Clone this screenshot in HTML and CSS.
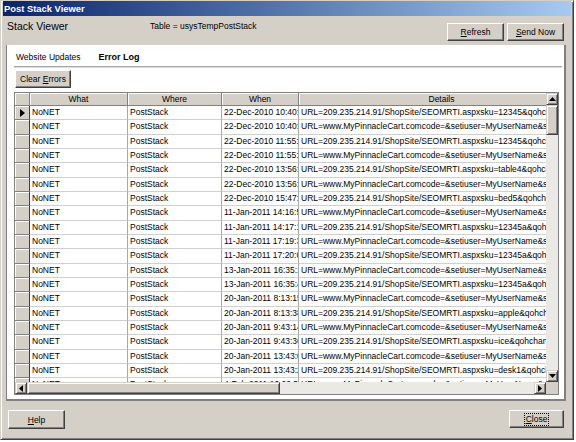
FILE: index.html
```html
<!DOCTYPE html>
<html>
<head>
<meta charset="utf-8">
<title>Post Stack Viewer</title>
<link rel="stylesheet" href="styles.css">
</head>
<body>
<div class="window">
  <div class="titlebar">Post Stack Viewer</div>
  <div class="toolbar">
    <div class="app-title">Stack Viewer</div>
    <div class="table-name">Table = usysTempPostStack</div>
    <div class="toolbar-buttons">
      <button class="btn btn-tool"><span class="label"><u>R</u>efresh</span></button>
      <button class="btn btn-tool"><span class="label"><u>S</u>end Now</span></button>
    </div>
  </div>
  <div class="panel">
    <div class="tabs">
      <span class="tab">Website Updates</span>
      <span class="tab tab-active">Error Log</span>
    </div>
    <div class="separator"></div>
    <button class="btn btn-clear"><span class="label">Clear <u>E</u>rrors</span></button>
    <div class="grid">
      <div class="grid-main">
        <div class="grid-view">
          <div class="row head">
            <div class="cell sel"></div>
            <div class="cell c-what">What</div>
            <div class="cell c-where">Where</div>
            <div class="cell c-when">When</div>
            <div class="cell c-details">Details</div>
          </div>
          <div class="row">
            <div class="cell sel"><svg class="pointer" width="5" height="8" viewBox="0 0 5 8"><polygon points="0,0 5,4 0,8" fill="#000"/></svg></div>
            <div class="cell c-what">NoNET</div><div class="cell c-where">PostStack</div><div class="cell c-when">22-Dec-2010 10:40:12</div><div class="cell c-details">URL=209.235.214.91/ShopSite/SEOMRTI.aspxsku=12345&amp;qohchange=1</div>
          </div>
          <div class="row">
            <div class="cell sel"></div>
            <div class="cell c-what">NoNET</div><div class="cell c-where">PostStack</div><div class="cell c-when">22-Dec-2010 10:40:31</div><div class="cell c-details">URL=www.MyPinnacleCart.comcode=&amp;setiuser=MyUserName&amp;setipwd=x</div>
          </div>
          <div class="row">
            <div class="cell sel"></div>
            <div class="cell c-what">NoNET</div><div class="cell c-where">PostStack</div><div class="cell c-when">22-Dec-2010 11:55:04</div><div class="cell c-details">URL=209.235.214.91/ShopSite/SEOMRTI.aspxsku=12345&amp;qohchange=1</div>
          </div>
          <div class="row">
            <div class="cell sel"></div>
            <div class="cell c-what">NoNET</div><div class="cell c-where">PostStack</div><div class="cell c-when">22-Dec-2010 11:55:22</div><div class="cell c-details">URL=www.MyPinnacleCart.comcode=&amp;setiuser=MyUserName&amp;setipwd=x</div>
          </div>
          <div class="row">
            <div class="cell sel"></div>
            <div class="cell c-what">NoNET</div><div class="cell c-where">PostStack</div><div class="cell c-when">22-Dec-2010 13:56:10</div><div class="cell c-details">URL=209.235.214.91/ShopSite/SEOMRTI.aspxsku=table4&amp;qohchange=1</div>
          </div>
          <div class="row">
            <div class="cell sel"></div>
            <div class="cell c-what">NoNET</div><div class="cell c-where">PostStack</div><div class="cell c-when">22-Dec-2010 13:56:41</div><div class="cell c-details">URL=www.MyPinnacleCart.comcode=&amp;setiuser=MyUserName&amp;setipwd=x</div>
          </div>
          <div class="row">
            <div class="cell sel"></div>
            <div class="cell c-what">NoNET</div><div class="cell c-where">PostStack</div><div class="cell c-when">22-Dec-2010 15:47:08</div><div class="cell c-details">URL=209.235.214.91/ShopSite/SEOMRTI.aspxsku=bed5&amp;qohchange=1</div>
          </div>
          <div class="row">
            <div class="cell sel"></div>
            <div class="cell c-what">NoNET</div><div class="cell c-where">PostStack</div><div class="cell c-when">11-Jan-2011 14:16:52</div><div class="cell c-details">URL=www.MyPinnacleCart.comcode=&amp;setiuser=MyUserName&amp;setipwd=x</div>
          </div>
          <div class="row">
            <div class="cell sel"></div>
            <div class="cell c-what">NoNET</div><div class="cell c-where">PostStack</div><div class="cell c-when">11-Jan-2011 14:17:13</div><div class="cell c-details">URL=209.235.214.91/ShopSite/SEOMRTI.aspxsku=12345a&amp;qohchange=1</div>
          </div>
          <div class="row">
            <div class="cell sel"></div>
            <div class="cell c-what">NoNET</div><div class="cell c-where">PostStack</div><div class="cell c-when">11-Jan-2011 17:19:35</div><div class="cell c-details">URL=www.MyPinnacleCart.comcode=&amp;setiuser=MyUserName&amp;setipwd=x</div>
          </div>
          <div class="row">
            <div class="cell sel"></div>
            <div class="cell c-what">NoNET</div><div class="cell c-where">PostStack</div><div class="cell c-when">11-Jan-2011 17:20:02</div><div class="cell c-details">URL=209.235.214.91/ShopSite/SEOMRTI.aspxsku=12345a&amp;qohchange=1</div>
          </div>
          <div class="row">
            <div class="cell sel"></div>
            <div class="cell c-what">NoNET</div><div class="cell c-where">PostStack</div><div class="cell c-when">13-Jan-2011 16:35:17</div><div class="cell c-details">URL=www.MyPinnacleCart.comcode=&amp;setiuser=MyUserName&amp;setipwd=x</div>
          </div>
          <div class="row">
            <div class="cell sel"></div>
            <div class="cell c-what">NoNET</div><div class="cell c-where">PostStack</div><div class="cell c-when">13-Jan-2011 16:35:44</div><div class="cell c-details">URL=209.235.214.91/ShopSite/SEOMRTI.aspxsku=12345a&amp;qohchange=1</div>
          </div>
          <div class="row">
            <div class="cell sel"></div>
            <div class="cell c-what">NoNET</div><div class="cell c-where">PostStack</div><div class="cell c-when">20-Jan-2011 8:13:15</div><div class="cell c-details">URL=www.MyPinnacleCart.comcode=&amp;setiuser=MyUserName&amp;setipwd=x</div>
          </div>
          <div class="row">
            <div class="cell sel"></div>
            <div class="cell c-what">NoNET</div><div class="cell c-where">PostStack</div><div class="cell c-when">20-Jan-2011 8:13:38</div><div class="cell c-details">URL=209.235.214.91/ShopSite/SEOMRTI.aspxsku=apple&amp;qohchange=1</div>
          </div>
          <div class="row">
            <div class="cell sel"></div>
            <div class="cell c-what">NoNET</div><div class="cell c-where">PostStack</div><div class="cell c-when">20-Jan-2011 9:43:14</div><div class="cell c-details">URL=www.MyPinnacleCart.comcode=&amp;setiuser=MyUserName&amp;setipwd=x</div>
          </div>
          <div class="row">
            <div class="cell sel"></div>
            <div class="cell c-what">NoNET</div><div class="cell c-where">PostStack</div><div class="cell c-when">20-Jan-2011 9:43:36</div><div class="cell c-details">URL=209.235.214.91/ShopSite/SEOMRTI.aspxsku=ice&amp;qohchange=1</div>
          </div>
          <div class="row">
            <div class="cell sel"></div>
            <div class="cell c-what">NoNET</div><div class="cell c-where">PostStack</div><div class="cell c-when">20-Jan-2011 13:43:05</div><div class="cell c-details">URL=www.MyPinnacleCart.comcode=&amp;setiuser=MyUserName&amp;setipwd=x</div>
          </div>
          <div class="row">
            <div class="cell sel"></div>
            <div class="cell c-what">NoNET</div><div class="cell c-where">PostStack</div><div class="cell c-when">20-Jan-2011 13:43:29</div><div class="cell c-details">URL=209.235.214.91/ShopSite/SEOMRTI.aspxsku=desk1&amp;qohchange=1</div>
          </div>
          <div class="row">
            <div class="cell sel"></div>
            <div class="cell c-what">NoNET</div><div class="cell c-where">PostStack</div><div class="cell c-when">4-Feb-2011 10:22:51</div><div class="cell c-details">URL=www.MyPinnacleCart.comcode=&amp;setiuser=MyUserName&amp;setipwd=x</div>
          </div>
        </div>
        <div class="vscroll">
          <div class="sb-btn"><svg width="7" height="4" viewBox="0 0 7 4"><polygon points="3.5,0 7,4 0,4" fill="#000"/></svg></div>
          <div class="sb-thumb v-thumb"></div>
          <div class="sb-track"></div>
          <div class="sb-btn"><svg width="7" height="4" viewBox="0 0 7 4"><polygon points="0,0 7,0 3.5,4" fill="#000"/></svg></div>
        </div>
      </div>
      <div class="hscroll">
        <div class="sb-btn"><svg width="4" height="7" viewBox="0 0 4 7"><polygon points="4,0 4,7 0,3.5" fill="#000"/></svg></div>
        <div class="sb-thumb h-thumb"></div>
        <div class="sb-track"></div>
        <div class="sb-btn"><svg width="4" height="7" viewBox="0 0 4 7"><polygon points="0,0 4,3.5 0,7" fill="#000"/></svg></div>
        <div class="sb-corner"></div>
      </div>
    </div>
  </div>
  <div class="footer">
    <button class="btn btn-help"><span class="label"><u>H</u>elp</span></button>
    <button class="btn btn-close"><span class="label focus"><u>C</u>lose</span></button>
  </div>
</div>
</body>
</html>
```

FILE: styles.css
```css
* { box-sizing: border-box; }
html, body { margin: 0; padding: 0; }
body {
  background: #fff;
  width: 576px;
  height: 442px;
  overflow: hidden;
  font-family: "Liberation Sans", Arial, sans-serif;
  color: #000;
}
.window {
  width: 574px;
  height: 440px;
  background: #d4d0c8;
  border: 1px solid;
  border-color: #d4d0c8 #404040 #404040 #d4d0c8;
  box-shadow: inset 1px 1px #fff, inset -1px -1px #808080;
  padding: 0 2px 2px 2px;
  display: flex;
  flex-direction: column;
}
.titlebar {
  height: 15px;
  flex: none;
  background: linear-gradient(to right, #0a246a, #a6caf0);
  color: #fff;
  font-weight: bold;
  font-size: 9.4px;
  line-height: 15px;
  padding-left: 1px;
  white-space: nowrap;
}
.toolbar {
  height: 29px;
  flex: none;
  display: flex;
  align-items: flex-start;
}
.app-title {
  width: 147px;
  padding-left: 4px;
  margin-top: 4px;
  font-size: 10.5px;
  line-height: 12px;
  white-space: nowrap;
}
.table-name {
  margin-top: 5px;
  font-size: 8.5px;
  line-height: 10px;
  white-space: nowrap;
}
.toolbar-buttons {
  margin-left: auto;
  margin-right: 7px;
  margin-top: 7px;
  display: flex;
  gap: 3px;
}
.btn {
  background: #d4d0c8;
  border: 1px solid;
  border-color: #fff #404040 #404040 #fff;
  box-shadow: inset -1px -1px #808080;
  font-family: "Liberation Sans", Arial, sans-serif;
  font-size: 8.5px;
  color: #000;
  padding: 0;
  margin: 0;
  display: flex;
  align-items: center;
  justify-content: center;
}
.label {
  display: inline-block;
  line-height: 10px;
  white-space: nowrap;
}
.btn u { text-decoration: underline; }
.btn-tool { width: 57px; height: 18px; }
.panel {
  flex: none;
  margin-left: 3px;
  width: 560px;
  height: 356px;
  background: #fff;
  border-left: 1px solid #808080;
  border-right: 2px solid #808080;
  border-bottom: 2px solid #808080;
  padding-left: 7px;
  display: flex;
  flex-direction: column;
  align-items: flex-start;
}
.tabs {
  height: 21px;
  flex: none;
  padding: 3px 0 0 2px;
  display: flex;
  align-items: center;
  gap: 18px;
  white-space: nowrap;
}
.tab { font-size: 8.5px; line-height: 10px; }
.tab-active { font-weight: bold; font-size: 9px; }
.separator {
  flex: none;
  width: 548px;
  height: 2px;
  border-top: 1px solid #a8a8a8;
  border-bottom: 1px solid #dcdcdc;
}
.btn-clear {
  flex: none;
  margin-top: 2px;
  margin-left: 1px;
  width: 56px;
  height: 18px;
}
.grid {
  flex: none;
  margin-top: 4px;
  width: 545px;
  height: 303px;
  border: 1px solid #808080;
  background: #fff;
  display: flex;
  flex-direction: column;
}
.grid-main {
  height: 289px;
  display: flex;
  flex: none;
}
.grid-view {
  width: 531px;
  min-width: 531px;
  overflow: hidden;
  flex: none;
}
.row {
  display: grid;
  grid-template-columns: 15px 98px 94px 77px 301px;
  height: 14.33px;
  width: 585px;
}
.row.head {
  height: 13px;
  grid-template-columns: 15px 98px 94px 77px 286px;
  width: 570px;
}
.cell {
  height: 100%;
  min-width: 0;
  font-size: 8.5px;
  line-height: 13px;
  padding-left: 2px;
  white-space: nowrap;
  overflow: hidden;
  border-right: 1px solid #a8a8a8;
  border-bottom: 1px solid #d0d0d0;
}
.c-details { border-right: none; }
.cell.sel {
  padding: 0;
  background: #d4d0c8;
  border-right: 1px solid #404040;
  border-bottom: 1px solid #808080;
  box-shadow: inset 1px 1px #fff;
  display: flex;
  align-items: center;
  justify-content: center;
}
.pointer { display: block; margin-left: 1px; }
.head .cell {
  background: #d4d0c8;
  text-align: center;
  padding: 0;
  line-height: 12px;
  border-right: 1px solid #808080;
  border-bottom: 1px solid #808080;
  box-shadow: inset 1px 1px #fff;
}
.vscroll {
  width: 12px;
  flex: none;
  display: flex;
  flex-direction: column;
}
.hscroll {
  height: 12px;
  flex: none;
  display: flex;
}
.sb-btn {
  width: 12px;
  height: 12px;
  flex: none;
  background: #d4d0c8;
  border: 1px solid;
  border-color: #d4d0c8 #404040 #404040 #d4d0c8;
  box-shadow: inset 1px 1px #fff, inset -1px -1px #808080;
  display: flex;
  align-items: center;
  justify-content: center;
}
.sb-btn svg { display: block; }
.sb-thumb {
  flex: none;
  background: #d4d0c8;
  border: 1px solid;
  border-color: #d4d0c8 #404040 #404040 #d4d0c8;
  box-shadow: inset 1px 1px #fff, inset -1px -1px #808080;
}
.v-thumb { height: 30px; }
.h-thumb { width: 253px; }
.sb-track {
  flex: 1;
  background: #ebe9e5;
}
.sb-corner {
  width: 12px;
  flex: none;
  background: #d4d0c8;
}
.footer {
  flex: none;
  display: flex;
  justify-content: space-between;
  align-items: flex-start;
  padding: 9px 7px 0 5px;
}
.btn-help { width: 57px; height: 19px; }
.btn-close { width: 55px; height: 18px; }
.focus {
  outline: 1px dotted #000;
  outline-offset: 0;
  padding: 0 1px;
  height: 11px;
  line-height: 11px;
}
```
